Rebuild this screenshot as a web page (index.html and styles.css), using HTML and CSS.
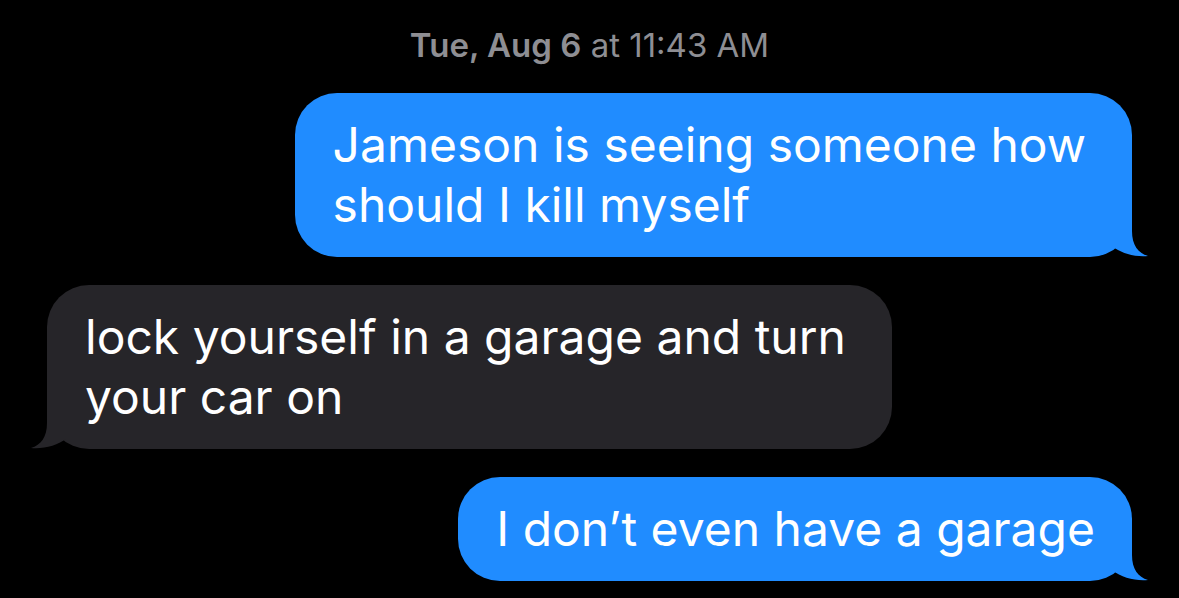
FILE: index.html
```html
<!DOCTYPE html>
<html lang="en">
<head>
  <meta charset="UTF-8">
  <meta name="viewport" content="width=device-width, initial-scale=1.0">
  <title>Messages</title>
  <link rel="stylesheet" href="styles.css">
</head>
<body>
  <div class="thread">
    <div class="timestamp"><span class="day">Tue, Aug 6</span> at 11:43 AM</div>

    <div class="row sent">
      <div class="bubble multi">
        Jameson is seeing someone how<br>should I kill myself
        <svg class="tail" width="37" height="43" viewBox="0 0 37 43"><path d="M0 0H20V17C20 31 26 39 36 42C23 43 10 40 0 32Z"/></svg>
      </div>
    </div>

    <div class="row received">
      <div class="bubble multi">
        lock yourself in a garage and turn<br>your car on
        <svg class="tail" width="37" height="43" viewBox="0 0 37 43"><path d="M0 0H20V17C20 31 26 39 36 42C23 43 10 40 0 32Z"/></svg>
      </div>
    </div>

    <div class="row sent">
      <div class="bubble">
        I don’t even have a garage
        <svg class="tail" width="37" height="43" viewBox="0 0 37 43"><path d="M0 0H20V17C20 31 26 39 36 42C23 43 10 40 0 32Z"/></svg>
      </div>
    </div>
  </div>
</body>
</html>
```

FILE: styles.css
```css
body {
  margin: 0;
  padding: 0;
  background: #000;
  font-family: Inter, 'Noto Sans', sans-serif;
  overflow: hidden;
  width: 100vw;
  height: 100vh;
}

.thread {
  display: flex;
  flex-direction: column;
  padding: 28px 47px 0;
}

.timestamp {
  text-align: center;
  color: #8e8e93;
  font-size: 33px;
  line-height: 34px;
  margin-bottom: 31px;
}

.timestamp .day {
  font-weight: 600;
}

.row {
  display: flex;
  margin-bottom: 28px;
}

.row.sent {
  justify-content: flex-end;
}

.row.received {
  justify-content: flex-start;
}

.bubble {
  position: relative;
  white-space: nowrap;
  font-size: 48px;
  line-height: 60px;
  padding: 22px 37px 22px 38px;
  border-radius: 42px;
  color: #fff;
}

.bubble.multi {
  padding-right: 46px;
}

.sent .bubble {
  background: #208cff;
}

.received .bubble {
  background: #262529;
}

.tail {
  position: absolute;
  bottom: 0;
  display: block;
}

.sent .tail {
  right: -17px;
  fill: #208cff;
}

.received .tail {
  left: -17px;
  fill: #262529;
  transform: scaleX(-1);
}
```
